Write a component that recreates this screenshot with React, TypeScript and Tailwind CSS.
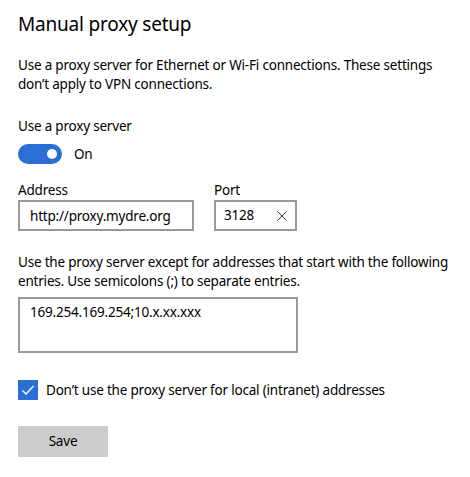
import React, { useState } from "react";

export default function App() {
  const [enabled, setEnabled] = useState(true);
  const [bypassLocal, setBypassLocal] = useState(true);
  const [address, setAddress] = useState("http://proxy.mydre.org");
  const [port, setPort] = useState("3128");
  const [exceptions, setExceptions] = useState("169.254.169.254;10.x.xx.xxx");

  return (
    <div
      className="w-[470px] h-[477px] bg-white text-black pl-[18px] pr-[10px] text-[13.5px] tracking-[-0.2px]"
      style={{ fontFamily: '"Noto Sans", sans-serif' }}
    >
      <h1 className="pt-[10px] text-[19px] leading-[28px] font-normal">Manual proxy setup</h1>

      <p className="mt-[18px] leading-[19px]">
        Use a proxy server for Ethernet or Wi-Fi connections. These settings don’t apply to VPN
        connections.
      </p>

      <div className="mt-[23px] leading-[19px]">Use a proxy server</div>
      <div className="mt-[8px] flex items-center gap-[12px]">
        <button
          className={`w-[44px] h-[20px] rounded-full flex items-center px-[5px] ${
            enabled ? "bg-[#2c6fd4] justify-end" : "border-2 border-black justify-start"
          }`}
          onClick={() => setEnabled(!enabled)}
        >
          <span className={`w-[10px] h-[10px] rounded-full ${enabled ? "bg-white" : "bg-black"}`} />
        </button>
        <span className="leading-[19px]">{enabled ? "On" : "Off"}</span>
      </div>

      <div className="mt-[17px] flex gap-[20px]">
        <div className="flex flex-col">
          <label className="leading-[19px]">Address</label>
          <input
            className="w-[176px] h-[31px] border-2 border-[#999999] px-[10px] outline-none"
            value={address}
            onChange={(e) => setAddress(e.target.value)}
          />
        </div>
        <div className="flex flex-col">
          <label className="leading-[19px]">Port</label>
          <div className="w-[83px] h-[31px] border-2 border-[#999999] flex items-center pl-[8px] pr-[6px]">
            <input
              className="w-full outline-none"
              value={port}
              onChange={(e) => setPort(e.target.value)}
            />
            <button onClick={() => setPort("")} className="shrink-0 w-[14px] h-[14px] flex items-center justify-center">
              <svg width="10" height="10" viewBox="0 0 10 10" stroke="#333" strokeWidth="1">
                <path d="M0.5 0.5 L9.5 9.5 M9.5 0.5 L0.5 9.5" />
              </svg>
            </button>
          </div>
        </div>
      </div>

      <p className="mt-[22px] leading-[19px]">
        Use the proxy server except for addresses that start with the following entries. Use
        semicolons (;) to separate entries.
      </p>
      <textarea
        className="mt-[6px] block w-[280px] h-[56px] border-2 border-[#999999] px-[10px] py-[4px] resize-none outline-none leading-[19px]"
        value={exceptions}
        onChange={(e) => setExceptions(e.target.value)}
      />

      <label className="mt-[27px] flex items-center gap-[8px] cursor-pointer">
        <button
          className={`w-[20px] h-[20px] flex items-center justify-center ${
            bypassLocal ? "bg-[#2c6fd4]" : "border-2 border-black"
          }`}
          onClick={() => setBypassLocal(!bypassLocal)}
        >
          {bypassLocal && (
            <svg width="14" height="14" viewBox="0 0 14 14" fill="none" stroke="white" strokeWidth="1.3">
              <path d="M1.5 7.5 L5 11 L12.5 3" />
            </svg>
          )}
        </button>
        <span className="leading-[19px]">Don’t use the proxy server for local (intranet) addresses</span>
      </label>

      <button className="mt-[26px] w-[90px] h-[31px] bg-[#cccccc]">Save</button>
    </div>
  );
}
